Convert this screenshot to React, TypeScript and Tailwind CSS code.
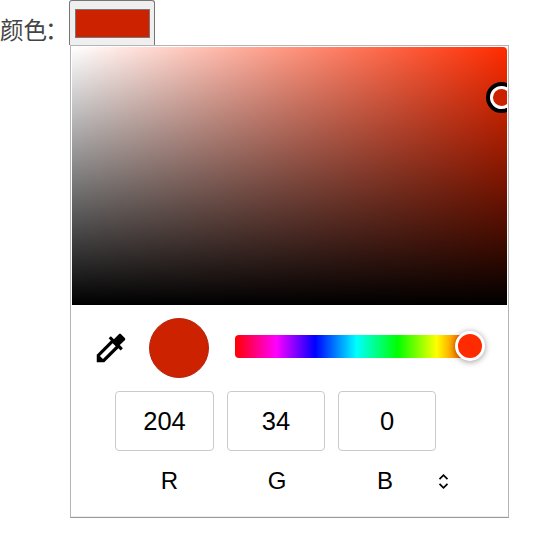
import React from "react";

function Channel({ value, name, width, shift }: { value: number; name: string; width: string; shift: string }) {
  return (
    <div className={`flex flex-col items-center ${width}`}>
      <div className="flex h-[60px] w-full items-center justify-center rounded-[4px] border border-[#cacaca] pt-[2px] text-[25.5px] leading-none">
        {value}
      </div>
      <span className={`mt-[18px] text-[24px] leading-6 ${shift}`}>{name}</span>
    </div>
  );
}

export default function App() {
  return (
    <main className="h-[545px] w-[543px] overflow-hidden bg-white font-['Liberation_Sans','Noto_Sans_CJK_SC',sans-serif] text-black">
      <div className="flex h-[45px]">
        <label className="w-[69px] whitespace-nowrap pt-[13px] text-[23.5px] leading-9 text-[#444]">
          颜色<span className="-ml-[2px]">：</span>
        </label>
        <div className="h-[45px] w-[86px] rounded-t-[3px] border border-b-0 border-[#767676] bg-[#efefef] px-[5px] pt-[8px]">
          <div className="h-[29px] w-[75px] border border-[#777] bg-[#cc2200]" />
        </div>
      </div>

      <section className="ml-[70px] h-[473px] w-[439px] border border-[#b5b5b5] border-b-[#999] bg-white p-px shadow-[inset_0_-1px_0_#eee]">
        <div className="relative h-[258px] w-[435px] overflow-hidden rounded-t-[4px] bg-[linear-gradient(to_top,#000,transparent),linear-gradient(to_right,#fff,#ff2b00)]">
          <div className="absolute left-[414px] top-[35px] h-[31px] w-[31px] rounded-full border-4 border-black bg-white p-[3px]">
            <div className="h-full w-full rounded-full bg-[#cc2200]" />
          </div>
        </div>

        <div className="flex pl-5 pt-[13px]">
          <svg className="mt-[11px] h-[38px] w-[38px]" viewBox="0 0 24 24">
            <path d="M20.71 5.63l-2.34-2.34c-.39-.39-1.02-.39-1.41 0l-3.12 3.12-1.93-1.91-1.41 1.41 1.42 1.42L3 16.25V21h4.75l8.92-8.92 1.42 1.42 1.41-1.41-1.92-1.92 3.12-3.12c.4-.4.4-1.03.01-1.42zM6.92 19L5 17.08l8.06-8.06 1.92 1.92L6.92 19z" />
          </svg>
          <div className="ml-[19px] h-[60px] w-[60px] rounded-full border border-[#b32410] bg-[#cc2200]" />
          <div className="relative ml-[26px] mt-[17px] h-[23px] w-[243px] rounded-[4px] bg-[linear-gradient(to_right,#f00,#f0f_17%,#00f_33%,#0ff_50%,#0f0_67%,#ff0_83%,#f00)]">
            <div className="absolute left-[220px] top-[-4px] h-[30px] w-[30px] rounded-full border-[3px] border-white bg-[#ff2b00] shadow-[0_1px_6px_rgba(0,0,0,0.4)]" />
          </div>
        </div>

        <div className="flex pl-[43px] pt-[13px]">
          <div className="flex gap-[13px]">
            <Channel value={204} name="R" width="w-[99px]" shift="translate-x-[5px]" />
            <Channel value={34} name="G" width="w-[98px]" shift="translate-x-px" />
            <Channel value={0} name="B" width="w-[98px]" shift="-translate-x-[2px]" />
          </div>
          <svg className="mt-[83px] ml-[2px] h-[15px] w-[11px]" viewBox="0 0 11 15" fill="none" stroke="#000" strokeWidth="1.7">
            <path d="M1.5 5.2 5.5 1.2 9.5 5.2M1.5 9.8 5.5 13.8 9.5 9.8" />
          </svg>
        </div>
      </section>
    </main>
  );
}
